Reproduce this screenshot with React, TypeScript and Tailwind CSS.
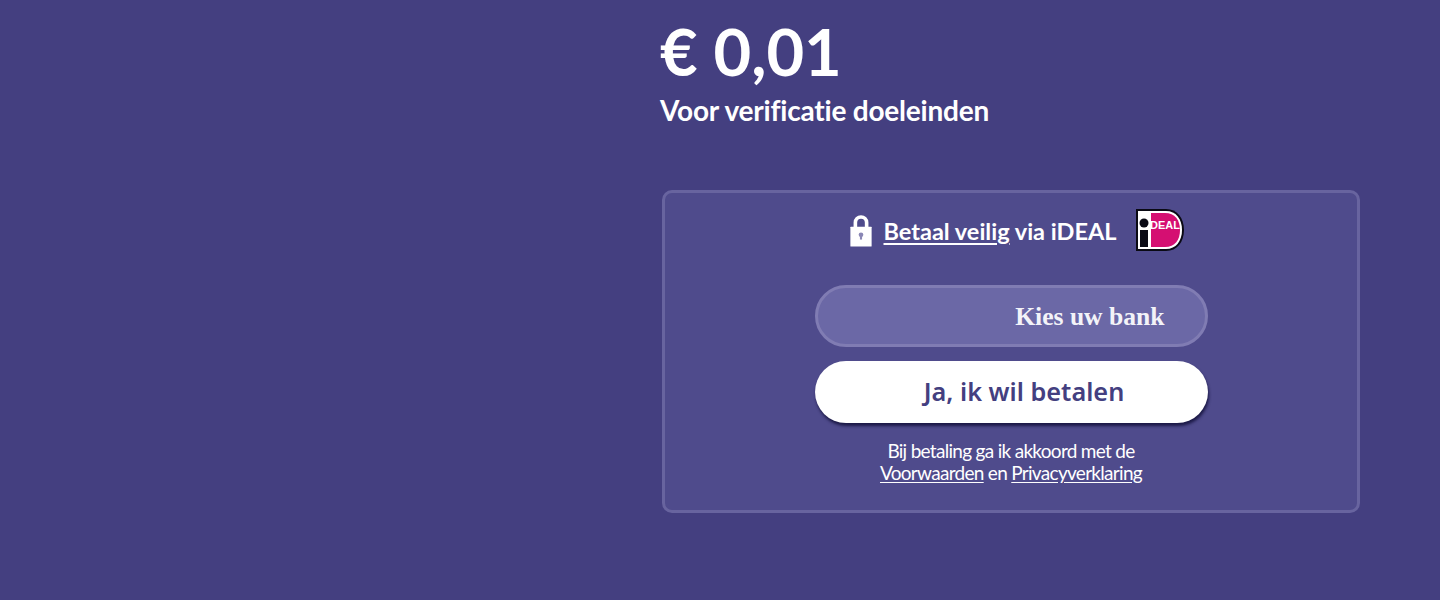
export default function App() {
  return (
    <div className="h-[600px] w-[1440px] overflow-hidden bg-[#443f80] pl-[660px] pt-[15px] text-white font-['Lato',sans-serif]">
      <div className="w-[700px]">
        <div className="text-[65px] leading-[72px] font-bold">€ 0,01</div>
        <div className="mt-[6px] text-[28px] leading-[34px] font-bold tracking-[-0.2px]">Voor verificatie doeleinden</div>
        <div className="mt-[63px] ml-[2px] flex h-[323px] w-[698px] flex-col items-center rounded-[10px] border-[3px] border-[#68649f] bg-[#4f4b8c]">
          <div className="mt-[16px] flex h-[44px] items-center pl-[11px]">
            <svg width="26" height="34" viewBox="0 0 24 32" className="mb-[2px] mr-[10px]">
              <path d="M5 14V9a7 7 0 0 1 14 0v5h-3.400V9a3.600 3.600 0 0 0-7.200 0v5z" fill="#fff" />
              <path d="M2.500 13h19a.5.5 0 0 1 .5.5V31a.5.5 0 0 1-.5.5h-19A.5.5 0 0 1 2 31V13.500a.5.5 0 0 1 .5-.5z" fill="#fff" />
              <circle cx="12" cy="20.500" r="2.200" fill="#8a87b5" />
              <rect x="11" y="21" width="2" height="4" fill="#8a87b5" />
            </svg>
            <span className="text-[23.500px] font-bold leading-[30px]">
              <a className="underline underline-offset-[3px] decoration-2">Betaal veilig</a> via iDEAL
            </span>
            <svg width="50" height="44" viewBox="0 0 50 44" className="mb-[2px] ml-[19px]">
              <path d="M1 1h30c11 0 18 9 18 21s-7 21-18 21H1z" fill="#0a0a14" />
              <path d="M3 3h28c10 0 16 8 16 19s-6 19-16 19H3z" fill="#fff" />
              <path d="M16 5h14c10 0 15 7 15 17s-5 17-15 17H16z" fill="#d50f72" />
              <circle cx="9" cy="15" r="4.500" fill="#0a0a14" />
              <rect x="5" y="22" width="8" height="17" fill="#0a0a14" />
              <text x="15" y="21" fontSize="11" fontWeight="700" fill="#fff" fontFamily="'Liberation Sans',sans-serif" textLength="30">DEAL</text>
            </svg>
          </div>
          <div className="mt-[32px] flex h-[62px] w-[393px] items-center justify-end rounded-full border-[3px] border-[#807cb3] bg-[#6b68a6] pr-[40px] pt-[3px] font-['Liberation_Serif',serif] text-[25.600px] font-bold text-[#f3f3f8]">
            Kies uw bank
          </div>
          <div className="mt-[14px] flex h-[62px] w-[393px] items-center justify-center rounded-full bg-white pl-[26px] text-[25.300px] font-semibold text-[#443f80] font-['Noto_Sans',sans-serif] shadow-[1px_3px_3px_rgba(20,18,60,0.85)]">
            Ja, ik wil betalen
          </div>
          <div className="mt-[17px] text-center text-[19px] leading-[22px] tracking-[-0.7px]">
            <div>Bij betaling ga ik akkoord met de</div>
            <div>
              <a className="underline underline-offset-2">Voorwaarden</a> en <a className="underline underline-offset-2">Privacyverklaring</a>
            </div>
          </div>
        </div>
      </div>
    </div>
  );
}
